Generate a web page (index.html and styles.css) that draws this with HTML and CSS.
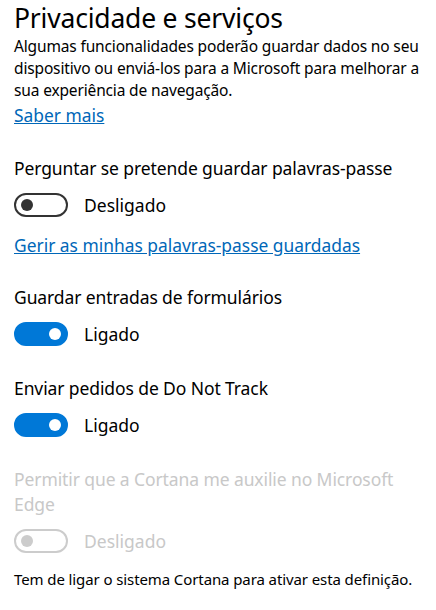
FILE: index.html
```html
<!DOCTYPE html>
<html lang="pt">
<head>
<meta charset="utf-8">
<link rel="stylesheet" href="styles.css">
</head>
<body>
<main class="panel">
  <h1 class="title">Privacidade e serviços</h1>
  <p class="desc">Algumas funcionalidades poderão guardar dados no seu dispositivo ou enviá-los para a Microsoft para melhorar a sua experiência de navegação.</p>
  <a class="link link-first" href="#">Saber mais</a>

  <section class="setting setting-first">
    <div class="label">Perguntar se pretende guardar palavras-passe</div>
    <div class="toggle-row">
      <span class="toggle off"><span class="knob"></span></span>
      <span class="state">Desligado</span>
    </div>
  </section>
  <a class="link link-manage" href="#">Gerir as minhas palavras-passe guardadas</a>

  <section class="setting">
    <div class="label">Guardar entradas de formulários</div>
    <div class="toggle-row">
      <span class="toggle on"><span class="knob"></span></span>
      <span class="state">Ligado</span>
    </div>
  </section>

  <section class="setting">
    <div class="label">Enviar pedidos de Do Not Track</div>
    <div class="toggle-row">
      <span class="toggle on"><span class="knob"></span></span>
      <span class="state">Ligado</span>
    </div>
  </section>

  <section class="setting disabled">
    <div class="label">Permitir que a Cortana me auxilie no Microsoft Edge</div>
    <div class="toggle-row">
      <span class="toggle off"><span class="knob"></span></span>
      <span class="state">Desligado</span>
    </div>
  </section>
  <p class="note">Tem de ligar o sistema Cortana para ativar esta definição.</p>
</main>
</body>
</html>
```

FILE: styles.css
```css
html, body {
  margin: 0;
  padding: 0;
  background: #ffffff;
}
body {
  font-family: "Noto Sans", "Open Sans", sans-serif;
  color: #000000;
}
.panel {
  padding: 0 14px;
  display: flex;
  flex-direction: column;
  align-items: flex-start;
  width: 408px;
}
.title {
  margin: 0;
  font-weight: 400;
  font-size: 26.5px;
  line-height: 36px;
  letter-spacing: -0.2px;
}
.desc {
  margin: -1px 0 0 0;
  font-size: 15.5px;
  line-height: 22px;
  letter-spacing: -0.15px;
}
.link {
  color: #0067b8;
  text-decoration: underline;
  font-size: 17.4px;
  line-height: 24px;
}
.link-first {
  margin-top: 2px;
}
.setting {
  display: flex;
  flex-direction: column;
  align-items: flex-start;
  margin-top: 28px;
  width: 100%;
}
.setting-first {
  margin-top: 29px;
}
.setting + .setting {
  margin-top: 30px;
}
.label {
  font-size: 17.5px;
  line-height: 25px;
  letter-spacing: -0.1px;
}
.toggle-row {
  display: flex;
  align-items: center;
  gap: 16px;
  margin-top: 12px;
  height: 24px;
}
.state {
  font-size: 17.5px;
  line-height: 24px;
}
.toggle {
  box-sizing: border-box;
  width: 54px;
  height: 24px;
  border-radius: 12px;
  border: 2px solid #333333;
  display: flex;
  align-items: center;
  padding: 0 5px;
}
.knob {
  width: 12px;
  height: 12px;
  border-radius: 50%;
  background: #333333;
}
.toggle.on {
  background: #0078d7;
  border-color: #0078d7;
  justify-content: flex-end;
}
.toggle.on .knob {
  background: #ffffff;
}
.link-manage {
  margin-top: 16px;
}
.disabled .label,
.disabled .state {
  color: #c8c8c8;
}
.disabled .toggle {
  border-color: #cccccc;
}
.disabled .knob {
  background: #cccccc;
}
.note {
  margin: 15px 0 0 0;
  font-size: 15px;
  line-height: 22px;
  letter-spacing: -0.1px;
  white-space: nowrap;
}
```
